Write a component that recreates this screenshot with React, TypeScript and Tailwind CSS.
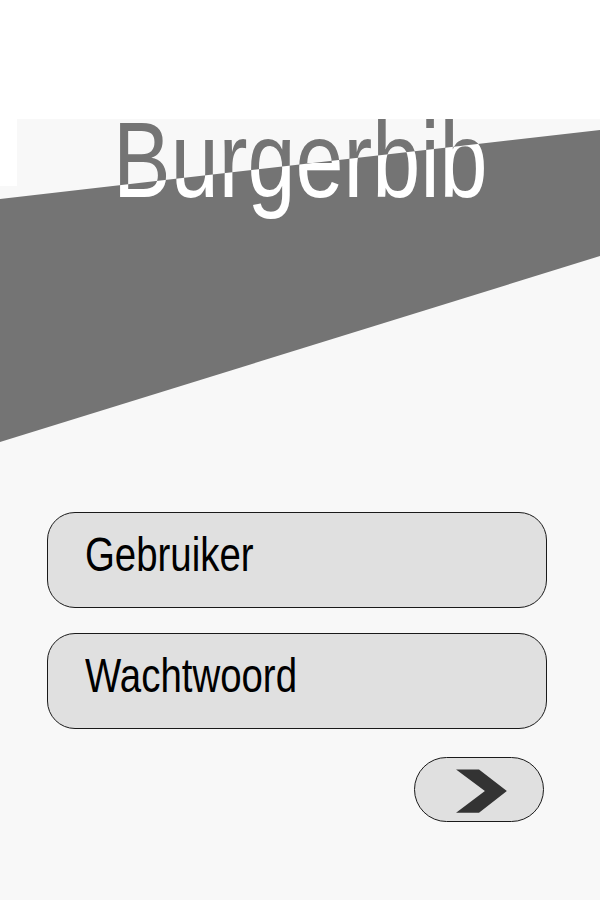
import React from "react";

const font = { fontFamily: '"Liberation Sans", Arial, sans-serif' };

function Field({ label }: { label: string }) {
  return (
    <div className="ml-[47px] w-[500px] h-[96px] rounded-[28px] border border-[#1a1a1a] bg-[#e0e0e0] pl-[37px] pt-[18px]">
      <span className="inline-block origin-left scale-x-[0.8] text-[48px] leading-[48px] text-black" style={font}>
        {label}
      </span>
    </div>
  );
}

export default function App() {
  return (
    <div className="w-[600px] h-[900px] bg-white overflow-hidden" style={font}>
      <div className="h-[119px]" />
      <div className="bg-[#f8f8f8] h-[781px]">
        {/* banner */}
        <div className="relative h-[323px]">
          <svg className="absolute inset-0" width="600" height="323" viewBox="0 0 600 323">
            <rect x="0" y="0" width="17" height="67" fill="#ffffff" />
            <polygon points="0,80 600,11 600,137 0,323" fill="#747474" />
          </svg>
          <h1 className="relative pl-[113px] text-[108px] leading-[82px] text-[#747474]">
            <span className="inline-block origin-left scale-x-[0.8]">Burgerbib</span>
          </h1>
          <h1 className="absolute inset-0 pl-[113px] text-[108px] leading-[82px] text-white [clip-path:polygon(0_80px,600px_11px,600px_137px,0_323px)]">
            <span className="inline-block origin-left scale-x-[0.8]">Burgerbib</span>
          </h1>
        </div>

        <div className="pt-[70px] flex flex-col gap-[25px]">
          <Field label="Gebruiker" />
          <Field label="Wachtwoord" />
        </div>

        <div className="flex justify-end pr-[56px] pt-[28px]">
          <button className="w-[130px] h-[65px] rounded-full border border-[#1a1a1a] bg-[#e0e0e0] flex items-center justify-center">
            <svg width="130" height="65" viewBox="0 0 130 65">
              <polygon points="41.7,12.3 65,12.3 93.3,34 65,56 41.7,56 71,34" fill="#333333" />
            </svg>
          </button>
        </div>
      </div>
    </div>
  );
}
